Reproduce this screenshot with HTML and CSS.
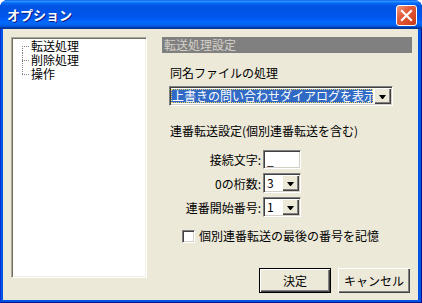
FILE: index.html
```html
<!DOCTYPE html>
<html lang="ja">
<head>
  <meta charset="UTF-8" />
  <title>オプション</title>
  <link rel="stylesheet" href="styles.css">
</head>
<body>

  <div class="window">
    <div class="titlebar">
      <span class="title">オプション</span>
      <button class="close" aria-label="閉じる">
        <svg width="13" height="13" viewBox="0 0 13 13">
          <path d="M2 2 L11 11 M11 2 L2 11" stroke="#fff" stroke-width="2.2" stroke-linecap="square" fill="none"/>
        </svg>
      </button>
    </div>

    <div class="client">
      <ul class="tree">
        <li class="first">転送処理</li>
        <li>削除処理</li>
        <li class="last">操作</li>
      </ul>

      <div class="panel">
        <div class="panel-head">転送処理設定</div>

        <div class="caption">同名ファイルの処理</div>
        <div class="combo wide">
          <span class="value selected">上書きの問い合わせダイアログを表示</span>
          <span class="drop"></span>
        </div>

        <div class="caption second">連番転送設定(個別連番転送を含む)</div>
        <div class="fields">
          <label>接続文字:</label>
          <div class="textbox">_</div>

          <label>0の桁数:</label>
          <div class="combo small">
            <span class="value">3</span>
            <span class="drop"></span>
          </div>

          <label>連番開始番号:</label>
          <div class="combo small">
            <span class="value">1</span>
            <span class="drop"></span>
          </div>
        </div>

        <label class="check"><span class="box"></span>個別連番転送の最後の番号を記憶</label>

        <div class="actions">
          <button class="btn default">決定</button>
          <button class="btn">キャンセル</button>
        </div>
      </div>
    </div>
  </div>

</body>
</html>
```

FILE: styles.css
```css
body {
  margin: 0;
  background: #fff;
  font-family: "Noto Sans CJK JP", "Noto Sans", sans-serif;
  font-size: 12px;
  color: #000;
}

.window {
  width: 422px;
  height: 303px;
  display: flex;
  flex-direction: column;
  border-radius: 8px 8px 0 0;
  overflow: hidden;
  background: #0054E3;
  box-shadow: inset 1px 0 #0831D9, inset -1px -1px #00138C;
}

.titlebar {
  height: 29px;
  flex: none;
  display: flex;
  align-items: center;
  padding: 0 5px 0 7px;
  background: linear-gradient(to bottom, #0058EE 0%, #3593FF 4%, #288EFF 6%, #127DFF 8%, #036FFC 10%, #0262EE 14%, #0057E5 20%, #0054E3 24%, #0055EB 56%, #005BF5 66%, #026AFE 76%, #0062EF 86%, #0052D6 92%, #0040AB 94%, #003092 100%);
}

.title {
  flex: 1;
  color: #fff;
  font-weight: bold;
  font-size: 13px;
  text-shadow: 1px 1px #0A1883;
}

.close {
  width: 21px;
  height: 21px;
  margin-top: 2px;
  padding: 0;
  display: flex;
  align-items: center;
  justify-content: center;
  border: 1px solid #fff;
  border-radius: 3px;
  background: linear-gradient(135deg, #F29A7E 0%, #E4603F 35%, #D84A27 70%, #C13A17 100%);
}

.client {
  flex: 1;
  display: flex;
  margin: 0 4px 3px 3px;
  padding: 8px 6px 7px 8px;
  background: #ECE9D8;
}

.tree {
  width: 136px;
  height: 241px;
  box-sizing: border-box;
  flex: none;
  margin: 0 15px 0 0;
  padding: 1px;
  list-style: none;
  background: #fff;
  border: 1px solid;
  border-color: #ACA899 #fff #fff #ACA899;
  box-shadow: inset 1px 1px #716F64, inset -1px -1px #F1EFE2;
}

.tree li {
  height: 14px;
  line-height: 14px;
  padding-left: 18px;
  white-space: nowrap;
  background:
    repeating-linear-gradient(to right, #808080 0 1px, transparent 1px 2px) 9px 7px / 8px 1px no-repeat,
    repeating-linear-gradient(to bottom, #808080 0 1px, transparent 1px 2px) 9px 0 / 1px 100% no-repeat;
}

.tree li.first {
  background:
    repeating-linear-gradient(to right, #808080 0 1px, transparent 1px 2px) 9px 7px / 8px 1px no-repeat,
    repeating-linear-gradient(to bottom, #808080 0 1px, transparent 1px 2px) 9px 7px / 1px 7px no-repeat;
}

.tree li.last {
  background:
    repeating-linear-gradient(to right, #808080 0 1px, transparent 1px 2px) 9px 7px / 8px 1px no-repeat,
    repeating-linear-gradient(to bottom, #808080 0 1px, transparent 1px 2px) 9px 0 / 1px 7px no-repeat;
}

.panel {
  flex: 1;
  display: flex;
  flex-direction: column;
}

.panel-head {
  height: 16px;
  line-height: 16px;
  padding-left: 2px;
  background: #808080;
  color: #D4D0C8;
}

.caption {
  margin: 13px 0 0 8px;
  line-height: 14px;
}

.caption.second {
  margin-top: 18px;
}

.combo,
.textbox {
  box-sizing: border-box;
  display: flex;
  padding: 1px;
  background: #fff;
  border: 1px solid;
  border-color: #808080 #fff #fff #808080;
  box-shadow: inset 1px 1px #404040, inset -1px -1px #D4D0C8;
}

.combo.wide {
  width: 224px;
  height: 20px;
  margin: 6px 0 0 7px;
}

.combo .value {
  flex: 1;
  overflow: hidden;
  white-space: nowrap;
  line-height: 16px;
  padding-left: 2px;
}

.combo .value.selected {
  margin: 1px 1px 1px 0;
  padding-left: 1px;
  line-height: 14px;
  background: #316AC5;
  color: #fff;
  outline: 1px dotted #F0D060;
  outline-offset: -1px;
}

.drop {
  width: 17px;
  flex: none;
  display: flex;
  align-items: center;
  justify-content: center;
  background: #ECE9D8;
  box-shadow: inset 1px 1px #fff, inset -1px -1px #404040, inset -2px -2px #808080;
}

.drop::after {
  content: "";
  width: 1px;
  border-top: 4px solid #000;
  border-left: 3px solid transparent;
  border-right: 3px solid transparent;
  margin-top: 1px;
}

.fields {
  display: grid;
  grid-template-columns: 91px 38px;
  grid-auto-rows: 20px;
  column-gap: 2px;
  row-gap: 4px;
  margin: 11px 0 0 8px;
  align-items: center;
}

.fields label {
  text-align: right;
  white-space: nowrap;
}

.textbox {
  height: 19px;
  line-height: 15px;
  padding-left: 3px;
}

.combo.small {
  height: 20px;
}

.check {
  display: flex;
  align-items: center;
  gap: 4px;
  margin: 12px 0 0 20px;
  line-height: 14px;
}

.check .box {
  width: 13px;
  height: 13px;
  box-sizing: border-box;
  background: #fff;
  border: 1px solid;
  border-color: #808080 #fff #fff #808080;
  box-shadow: inset 1px 1px #404040, inset -1px -1px #D4D0C8;
}

.actions {
  margin-top: auto;
  display: flex;
  justify-content: flex-end;
  gap: 7px;
  padding-right: 2px;
}

.btn {
  width: 72px;
  height: 25px;
  padding: 0;
  font-family: inherit;
  font-size: 12px;
  color: #000;
  background: #ECE9D8;
  border: none;
  box-shadow: inset 1px 1px #fff, inset -1px -1px #404040, inset -2px -2px #808080;
}

.btn.default {
  border: 1px solid #000;
}
```
